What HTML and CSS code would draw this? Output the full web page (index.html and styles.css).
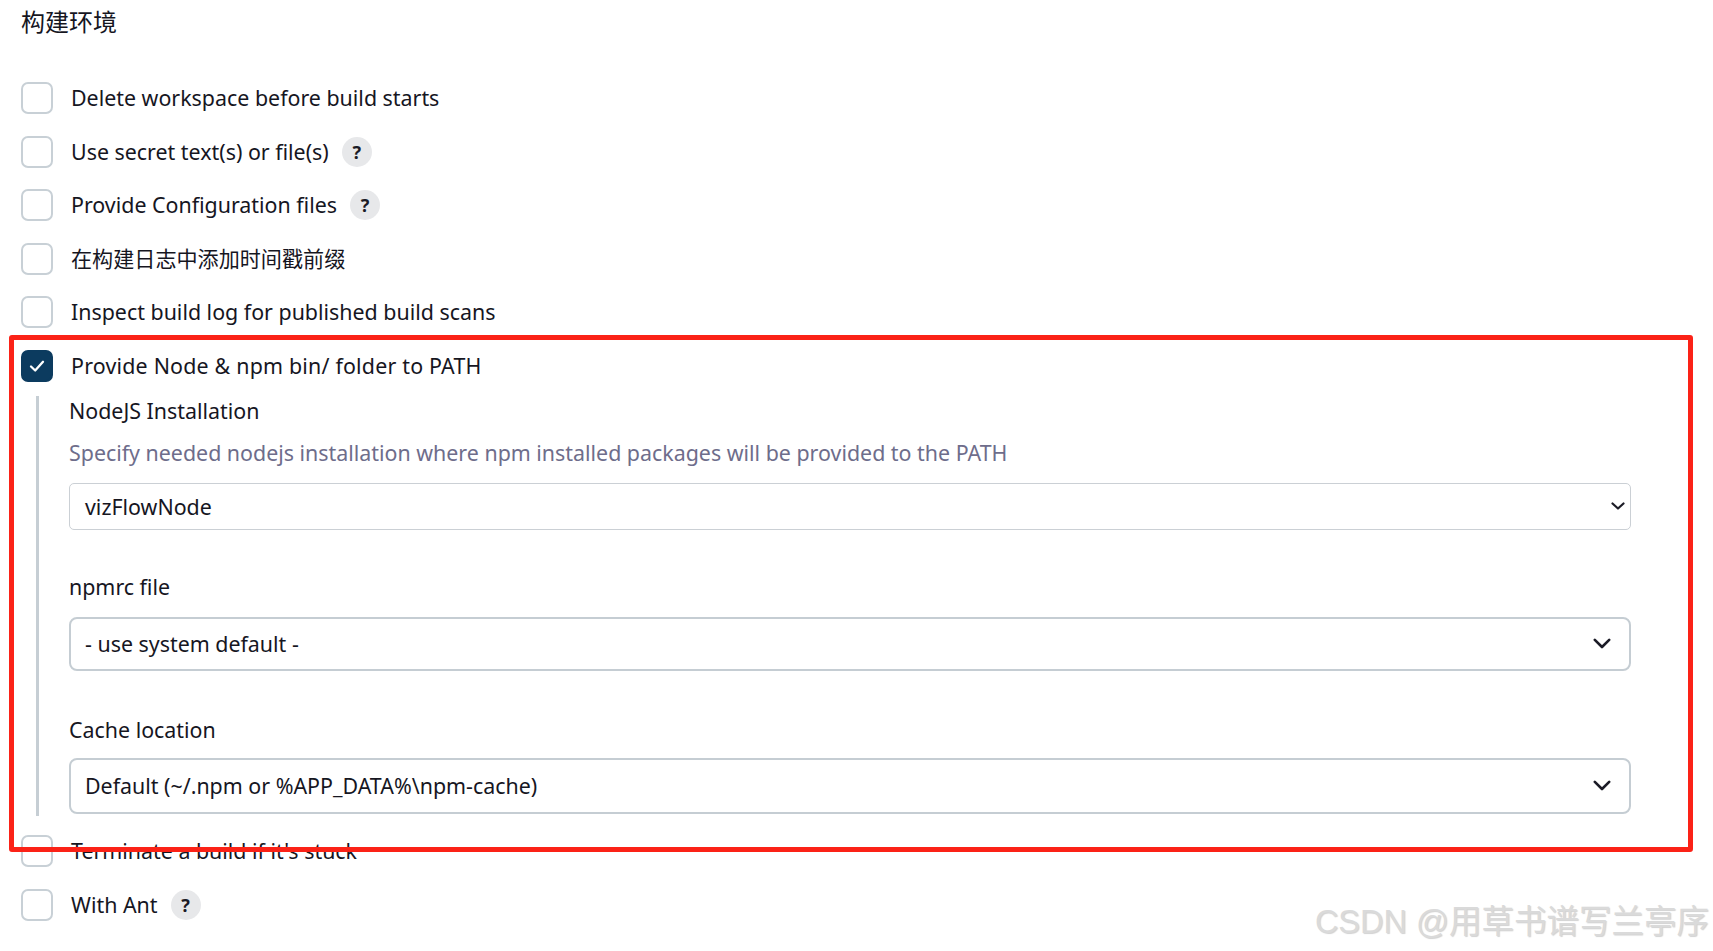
FILE: index.html
```html
<!DOCTYPE html>
<html lang="zh-CN">

<head>
    <meta charset="UTF-8">
    <meta name="viewport" content="width=device-width, initial-scale=1.0">
    <title>构建环境</title>
    <link rel="stylesheet" href="styles.css">
</head>

<body>
    <div class="section">
        <h2 class="section-title">构建环境</h2>

        <div class="option-list">
            <div class="option">
                <span class="checkbox"></span>
                <span class="option-label">Delete workspace before build starts</span>
            </div>
            <div class="option">
                <span class="checkbox"></span>
                <span class="option-label">Use secret text(s) or file(s)</span>
                <span class="help">?</span>
            </div>
            <div class="option">
                <span class="checkbox"></span>
                <span class="option-label">Provide Configuration files</span>
                <span class="help">?</span>
            </div>
            <div class="option">
                <span class="checkbox"></span>
                <span class="option-label cjk">在构建日志中添加时间戳前缀</span>
            </div>
            <div class="option">
                <span class="checkbox"></span>
                <span class="option-label">Inspect build log for published build scans</span>
            </div>
            <div class="option">
                <span class="checkbox checked">
                    <svg width="20" height="20" viewBox="0 0 20 20">
                        <path d="M4 10.5 L8.2 14.5 L16 5.8" fill="none" stroke="#fff" stroke-width="2.3" stroke-linecap="round" stroke-linejoin="round" />
                    </svg>
                </span>
                <span class="option-label wide">Provide Node &amp; npm bin/ folder to PATH</span>
            </div>

            <!-- nested config for the node option -->
            <div class="nested">
                <div class="field-label">NodeJS Installation</div>
                <div class="field-desc">Specify needed nodejs installation where npm installed packages will be provided to the PATH</div>
                <div class="select select-thin">
                    <span>vizFlowNode</span>
                    <svg width="14" height="8" viewBox="0 0 14 8">
                        <path d="M1.5 1.5 L7 6.5 L12.5 1.5" fill="none" stroke="#1b1b26" stroke-width="2.2" stroke-linecap="round" stroke-linejoin="round" />
                    </svg>
                </div>

                <div class="field-label field-gap">npmrc file</div>
                <div class="select">
                    <span>- use system default -</span>
                    <svg width="18" height="11" viewBox="0 0 18 11">
                        <path d="M1.8 1.8 L9 9 L16.2 1.8" fill="none" stroke="#1b1b26" stroke-width="2.6" stroke-linecap="round" stroke-linejoin="round" />
                    </svg>
                </div>

                <div class="field-label field-gap field-gap-last">Cache location</div>
                <div class="select select-last">
                    <span>Default (~/.npm or %APP_DATA%\npm-cache)</span>
                    <svg width="18" height="11" viewBox="0 0 18 11">
                        <path d="M1.8 1.8 L9 9 L16.2 1.8" fill="none" stroke="#1b1b26" stroke-width="2.6" stroke-linecap="round" stroke-linejoin="round" />
                    </svg>
                </div>
            </div>

            <div class="option option-after">
                <span class="checkbox"></span>
                <span class="option-label">Terminate a build if it's stuck</span>
            </div>
            <div class="option">
                <span class="checkbox"></span>
                <span class="option-label">With Ant</span>
                <span class="help">?</span>
            </div>
        </div>
    </div>

    <div class="highlight"></div>
    <div class="watermark">CSDN @用草书谱写兰亭序</div>
</body>

</html>
```

FILE: styles.css
```css
body {
    margin: 0;
    font-family: "Noto Sans", "Noto Sans CJK SC", sans-serif;
    color: #16161f;
    background: #fff;
    position: relative;
    min-height: 951px;
}

.section {
    padding: 0 21px;
}

.section-title {
    margin: 0;
    padding-top: 6px;
    height: 76px;
    font-size: 24px;
    font-weight: normal;
    line-height: 30px;
    font-family: "Noto Sans CJK SC", sans-serif;
}

.option {
    display: flex;
    align-items: center;
    height: 32px;
    margin-bottom: 21.6px;
}

.option-label {
    margin-left: 18px;
    font-size: 21.4px;
    line-height: 32px;
    white-space: nowrap;
}

.option-label.cjk {
    font-size: 21.1px;
}

.option-label.wide {
    letter-spacing: 0.2px;
}

.checkbox {
    flex: none;
    width: 32px;
    height: 32px;
    box-sizing: border-box;
    border: 2px solid #c8d0d6;
    border-radius: 7px;
    display: flex;
    align-items: center;
    justify-content: center;
}

.checkbox.checked {
    background-color: #0c3b5f;
    border-color: #0c3b5f;
}

.help {
    margin-left: 13px;
    width: 30px;
    height: 30px;
    border-radius: 50%;
    background-color: #e7e8ea;
    display: flex;
    align-items: center;
    justify-content: center;
    font-size: 18px;
    font-weight: bold;
    color: #1b1b26;
}

.nested {
    margin: -7.6px 0 0 15px;
    border-left: 3px solid #c6ced4;
    padding: 0 0 2px 30px;
}

.field-label {
    font-size: 21.4px;
    line-height: 30px;
}

.field-gap {
    margin-top: 42px;
}

.field-gap-last {
    margin-top: 44px;
}

.field-desc {
    margin-top: 12px;
    font-size: 21.4px;
    line-height: 30px;
    color: #6e6d8b;
    white-space: nowrap;
}

.select {
    margin-top: 15px;
    height: 54px;
    box-sizing: border-box;
    width: 1562px;
    border: 2px solid #c5cdd3;
    border-radius: 8px;
    display: flex;
    align-items: center;
    justify-content: space-between;
    padding: 0 18px 0 14px;
    font-size: 21.4px;
}

.select-thin {
    margin-top: 15px;
    height: 47px;
    border-width: 1px;
    border-color: #cbd0d5;
    border-radius: 5px;
    padding: 0 5px 0 15px;
}

.select-last {
    margin-top: 13px;
    height: 56px;
}

.option-after {
    margin-top: 19.5px;
}

/* red annotation frame drawn over the screenshot */
.highlight {
    position: absolute;
    left: 9px;
    top: 335px;
    width: 1684px;
    height: 517px;
    box-sizing: border-box;
    border: 5px solid #fb2217;
    border-radius: 3px;
}

.watermark {
    position: absolute;
    right: 4px;
    top: 895px;
    font-family: "Liberation Sans", "Noto Sans CJK SC", sans-serif;
    font-size: 32.5px;
    color: #dadada;
    text-shadow: 1px 1px 1px rgba(0, 0, 0, 0.18);
    white-space: nowrap;
}
```
